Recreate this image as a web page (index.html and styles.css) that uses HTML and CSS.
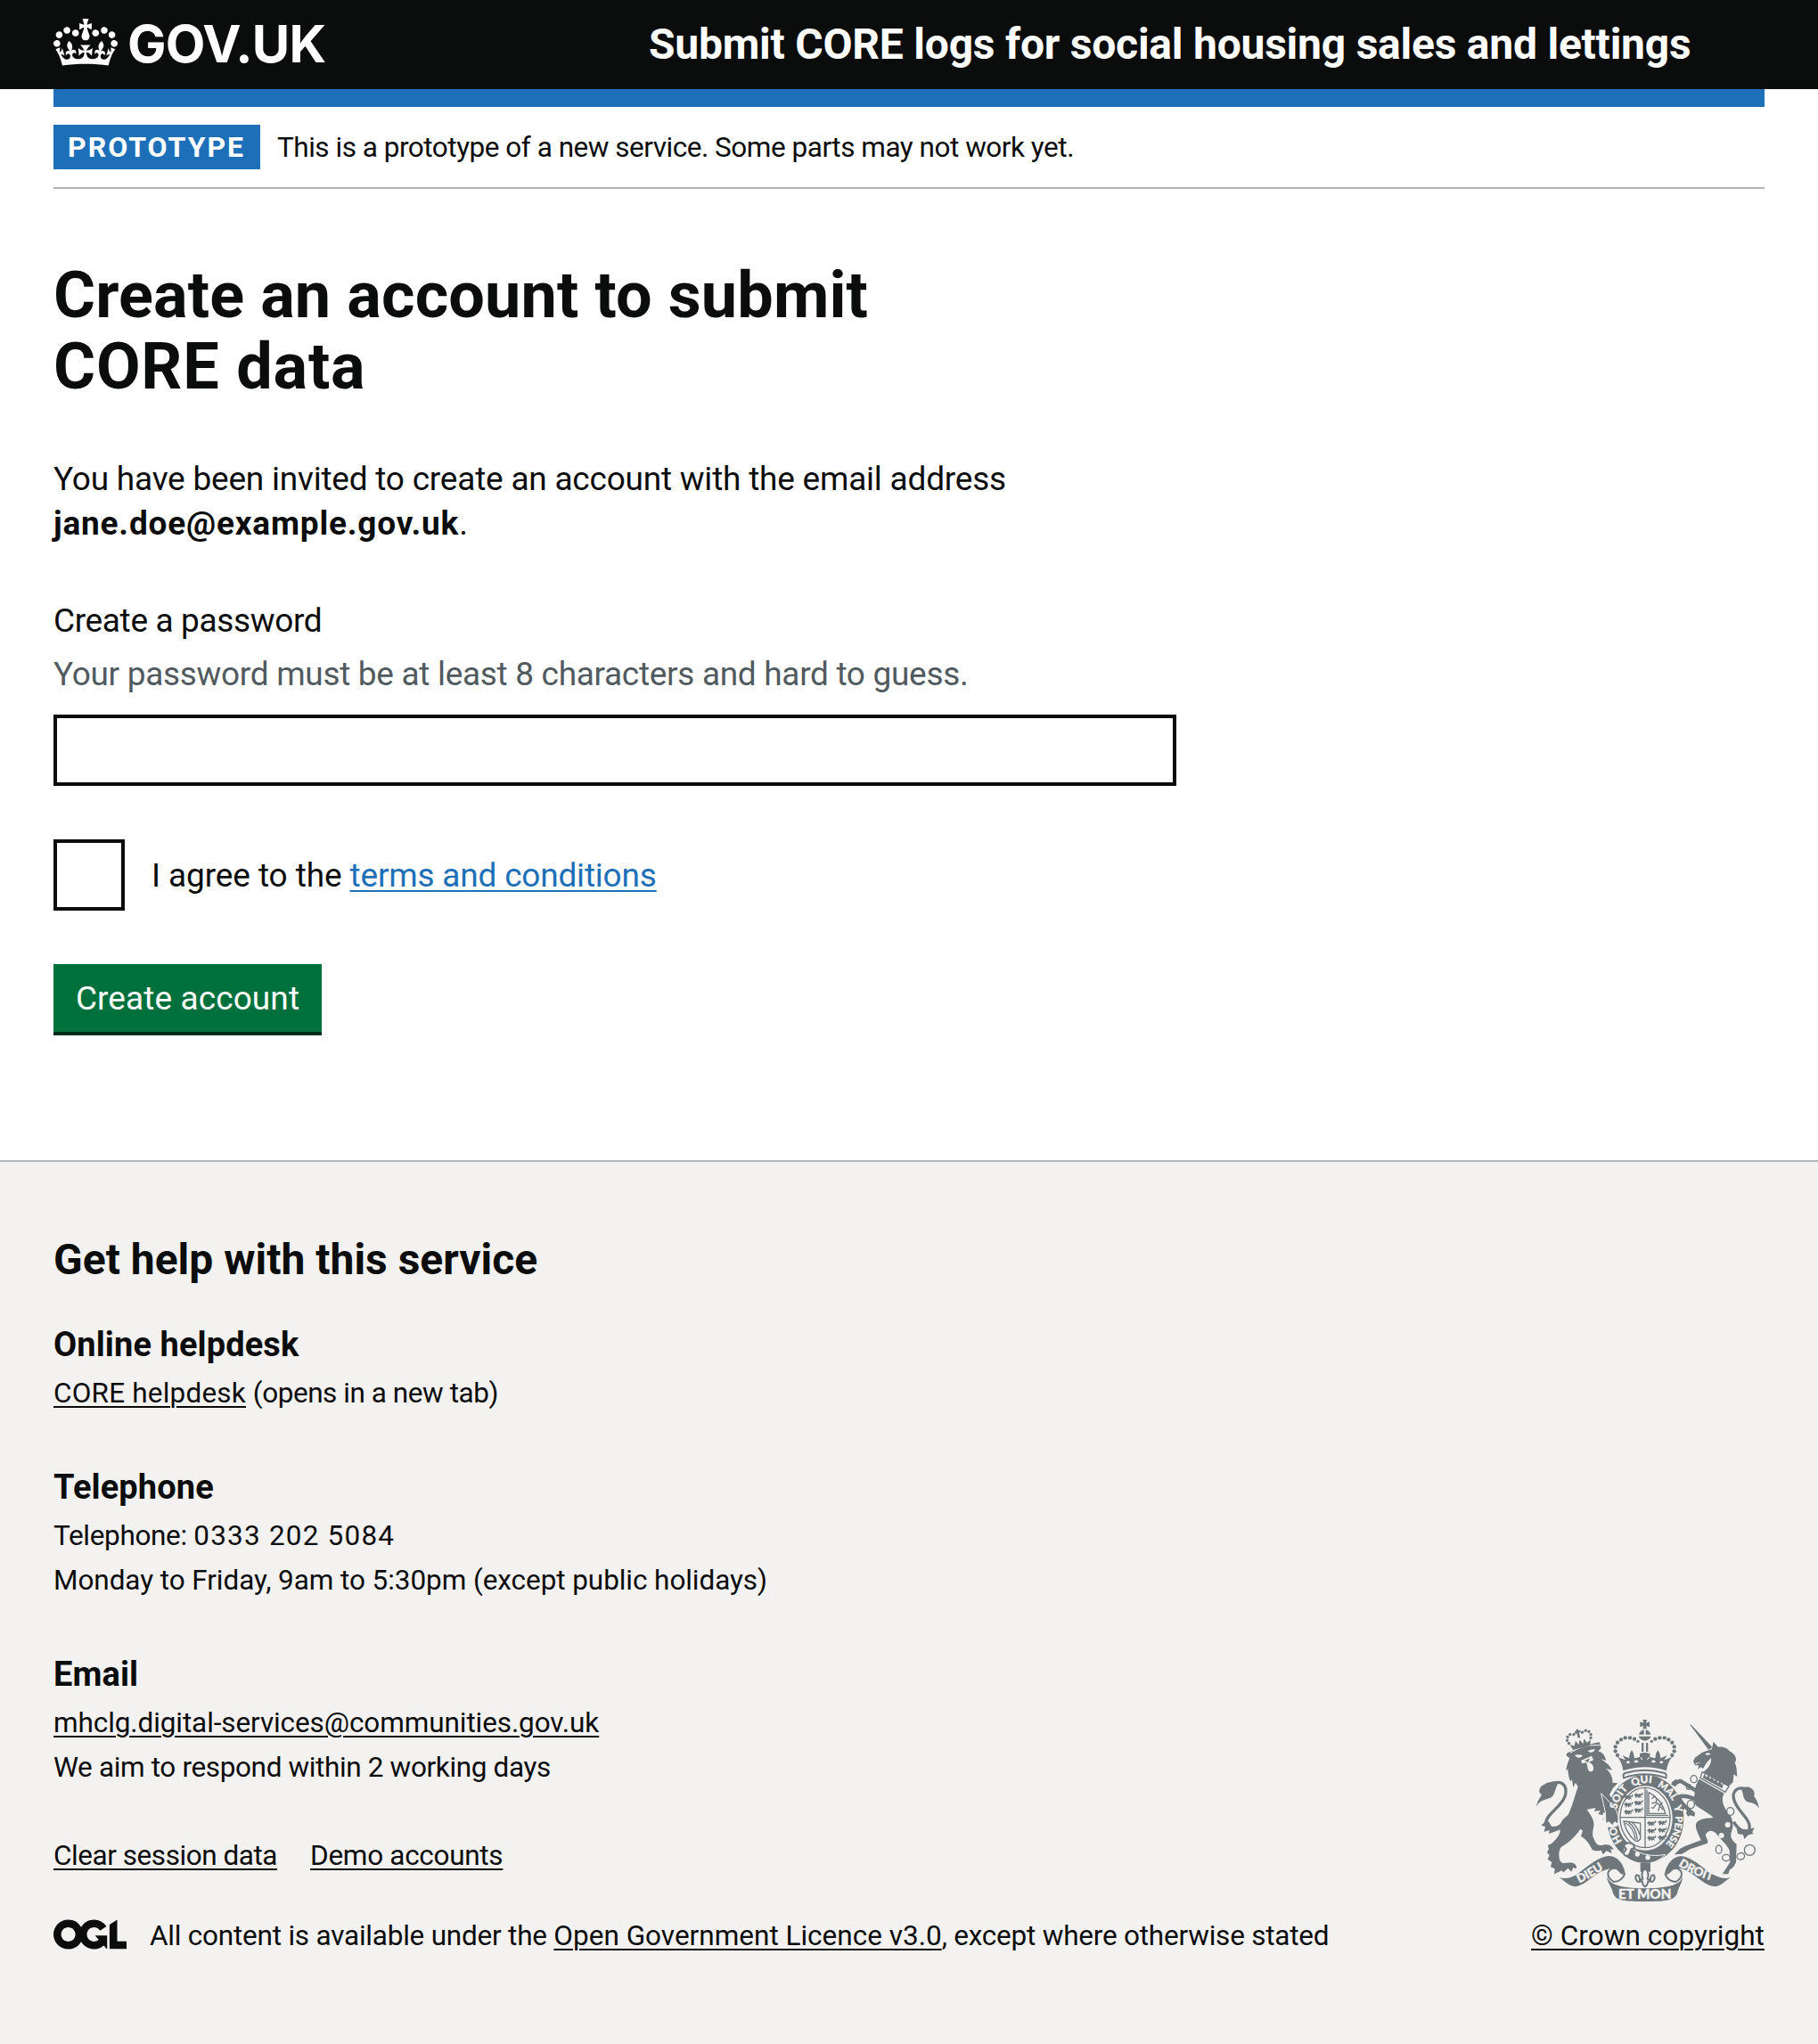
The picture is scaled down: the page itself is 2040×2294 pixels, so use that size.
FILE: index.html
```html
<!DOCTYPE html>
<html lang="en">
<head>
<meta charset="utf-8">
<title>Create an account to submit CORE data</title>
<link rel="stylesheet" href="styles.css">
</head>
<body>
<header class="header">
  <div class="header-inner">
    <a class="logo" href="#">
      <svg class="logo-crown" viewBox="0 0 132 97" aria-hidden="true"><path fill="currentColor" fill-rule="evenodd" d="M25 30.2c3.5 1.5 7.7-.2 9.1-3.7 1.5-3.6-.2-7.8-3.9-9.2-3.6-1.4-7.6.3-9.1 3.9-1.4 3.5.3 7.5 3.9 9zM9 39.5c3.6 1.5 7.8-.2 9.2-3.7 1.5-3.6-.2-7.8-3.9-9.1-3.6-1.5-7.6.2-9.1 3.8-1.4 3.5.3 7.5 3.8 9zM4.4 57.2c3.5 1.5 7.7-.2 9.1-3.8 1.5-3.6-.2-7.7-3.9-9.1-3.5-1.5-7.6.3-9.1 3.8-1.4 3.5.3 7.6 3.9 9.1zm38.3-21.4c3.5 1.5 7.7-.2 9.1-3.8 1.5-3.6-.2-7.7-3.9-9.1-3.6-1.5-7.6.3-9.1 3.8-1.3 3.6.4 7.7 3.9 9.1zm64.4-5.6c-3.6 1.5-7.8-.2-9.1-3.7-1.5-3.6.2-7.8 3.8-9.2 3.6-1.4 7.7.3 9.2 3.9 1.3 3.5-.4 7.5-3.9 9zm15.9 9.3c-3.6 1.5-7.7-.2-9.1-3.7-1.5-3.6.2-7.8 3.7-9.1 3.6-1.5 7.7.2 9.2 3.8 1.5 3.5-.3 7.5-3.8 9zm4.7 17.7c-3.6 1.5-7.8-.2-9.2-3.8-1.5-3.6.2-7.7 3.9-9.1 3.6-1.5 7.7.3 9.2 3.8 1.3 3.5-.4 7.6-3.9 9.1zM89.3 35.8c-3.6 1.5-7.8-.2-9.2-3.8-1.4-3.6.2-7.7 3.9-9.1 3.6-1.5 7.7.3 9.2 3.8 1.4 3.6-.3 7.7-3.9 9.1zM69.7 17.7l8.9 4.7V9.3l-8.9 2.8c-.2-.3-.5-.6-.9-.9L72.4 0H59.6l3.5 11.2c-.3.3-.6.5-.9.9l-8.8-2.8v13.1l8.8-4.7c.3.3.6.7.9.9l-5 15.4v.1c-.2.8-.4 1.6-.4 2.4 0 4.1 3.1 7.5 7 8.1h.2c.3 0 .7.1 1 .1.4 0 .7 0 1-.1h.2c4-.6 7.1-4.1 7.1-8.1 0-.8-.1-1.7-.4-2.4V34l-5.1-15.4c.4-.2.7-.6 1-.9zM66 92.8c16.9 0 32.8 1.1 47.1 3.2 4-16.9 8.9-26.7 14-33.5l-9.6-3.4c1 4.9 1.1 7.2 0 10.2-1.5-1.4-3-4.3-4.2-8.7L108.6 76c2.8-2 5-3.2 7.5-3.3-4.4 9.4-10 11.9-13.6 11.2-4.3-.8-6.3-4.6-5.6-7.9 1-4.7 5.7-5.9 8-.5 4.3-8.7-3-11.4-7.6-8.8 7.1-7.2 7.9-13.5 2.1-21.1-8 6.1-8.1 12.3-4.5 20.8-4.7-5.4-12.1-2.5-9.5 6.2 3.4-5.2 7.9-2 7.2 3.1-.6 4.3-6.4 7.8-13.5 7.2-10.3-.9-10.9-8-11.2-13.8 2.5-.5 7.1 1.8 11 7.3L80.2 60c-4.1 4.4-8 5.3-12.3 5.4 1.4-4.4 8-11.6 8-11.6H55.5s6.4 7.2 7.9 11.6c-4.2-.1-8-1-12.3-5.4l1.4 16.4c3.9-5.5 8.5-7.7 10.9-7.3-.3 5.8-.9 12.8-11.1 13.8-7.2.6-12.9-2.9-13.5-7.2-.7-5 3.8-8.3 7.1-3.1 2.7-8.7-4.6-11.6-9.4-6.2 3.7-8.5 3.6-14.7-4.6-20.8-5.8 7.6-5 13.9 2.2 21.1-4.7-2.6-11.9.1-7.7 8.8 2.3-5.5 7.1-4.2 8.1.5.7 3.3-1.3 7.1-5.7 7.9-3.5.7-9-1.8-13.5-11.2 2.5.1 4.7 1.3 7.5 3.3l-4.7-15.4c-1.2 4.4-2.7 7.2-4.3 8.7-1.1-3-.9-5.3 0-10.2l-9.5 3.4c5 6.9 9.9 16.7 14 33.5 14.8-2.1 30.8-3.2 47.7-3.2z"/></svg>
      <span class="logo-text">GOV.UK</span>
    </a>
    <a class="service-name" href="#">Submit CORE logs for social housing sales and lettings</a>
  </div>
</header>

<div class="container">
  <div class="blue-bar"></div>
  <div class="phase-banner">
    <strong class="tag">PROTOTYPE</strong>
    <span class="phase-text">This is a prototype of a new service. Some parts may not work yet.</span>
  </div>
  <main class="main">
    <h1 class="heading-l">Create an account to submit<br><span class="heading-tail">CORE data</span></h1>
    <p class="body"><span class="intro">You have been invited to create an account with the email address</span><br><strong class="email">jane.doe@example.gov.uk</strong>.</p>
    <form class="form">
      <label class="label" for="password">Create a password</label>
      <div class="hint">Your password must be at least 8 characters and hard to guess.</div>
      <input class="input" id="password" type="password">
      <div class="checkbox">
        <input class="checkbox-input" id="terms" type="checkbox">
        <label class="checkbox-label" for="terms">I agree to the <a class="link" href="#">terms and conditions</a></label>
      </div>
      <button class="button" type="button">Create account</button>
    </form>
  </main>
</div>

<footer class="footer">
  <div class="container footer-inner">
    <div class="footer-main">
      <h2 class="heading-m">Get help with this service</h2>
      <h3 class="heading-s">Online helpdesk</h3>
      <ul class="list">
        <li><a class="footer-link t-core" href="#">CORE helpdesk</a> <span class="t-opens">(opens in a new tab)</span></li>
      </ul>
      <h3 class="heading-s">Telephone</h3>
      <ul class="list">
        <li class="t-phone">Telephone: <span class="t-number">0333 202 5084</span></li>
        <li class="t-hours">Monday to Friday, 9am to 5:30pm (except public holidays)</li>
      </ul>
      <h3 class="heading-s">Email</h3>
      <ul class="list list-last">
        <li class="t-mail"><a class="footer-link" href="#">mhclg.digital-services@communities.gov.uk</a></li>
        <li class="t-reply">We aim to respond within 2 working days</li>
      </ul>
      <nav class="meta-links">
        <a class="footer-link t-clear" href="#">Clear session data</a>
        <a class="footer-link t-demo" href="#">Demo accounts</a>
      </nav>
      <div class="licence">
        <svg class="ogl" viewBox="0 0 483.2 195.7" aria-hidden="true"><path fill="currentColor" d="M421.5 142.8V.1l-50.7 32.3v161.1h112.4v-50.7zm-122.3-9.6A47.12 47.12 0 0 1 221 97.8c0-26 21.1-47.1 47.1-47.1 16.7 0 31.4 8.7 39.7 21.8l42.7-27.2A97.63 97.63 0 0 0 268.1 0c-36.5 0-68.3 20.1-85.1 49.7A98 98 0 0 0 97.8 0C43.9 0 0 43.9 0 97.8s43.9 97.8 97.8 97.8c36.5 0 68.3-20.1 85.1-49.7a97.76 97.76 0 0 0 149.6 25.4l19.4 22.2h3v-87.8h-80l24.3 27.5zM97.8 145c-26 0-47.1-21.1-47.1-47.1s21.1-47.1 47.1-47.1 47.1 21.1 47.1 47.1S123.8 145 97.8 145"/></svg>
        <span class="licence-text">All content is available under the <a class="footer-link t-ogl" href="#">Open Government Licence v3.0</a>, except where otherwise stated</span>
      </div>
    </div>
    <div class="copyright">
      <svg class="crest" viewBox="72 60 750 612" aria-hidden="true">
        <defs>
          <path id="g1" d="M361.6 469A101 118 0 0 1 338 410"/>
          <path id="g2" d="M342 362A101 118 0 0 1 410 278"/>
          <path id="g3" d="M397 286A101 118 0 0 1 505 297"/>
          <path id="g4" d="M479 285A101 118 0 0 1 545 385"/>
          <path id="g5" d="M534 351A101 118 0 0 1 540 410"/>
          <path id="g6" d="M540 385A101 118 0 0 1 475 502"/>
          <path id="r1" d="M216 610Q266 588 328 542"/>
          <path id="r2" d="M549 551Q604 588 700 614"/>
          <g id="beast"><path d="M0 6l6-5 5 4 9-2 5 4-5 3 6 7-8-3-3 5-4-6-7 6-1-8-4-1z"/><path class="thin" d="M22 8q8-2 4-8"/></g>
          <g id="three"><use href="#beast"/><use href="#beast" y="25"/><use href="#beast" y="50"/></g>
        </defs>

        <!-- lion -->
        <path class="tail" d="M116 282C150 260 176 274 170 312C164 350 100 380 104 410C108 440 150 430 166 400"/>
        <path d="M72 352C76 330 84 326 90 312C76 306 80 286 98 278C116 268 146 264 152 270C132 282 140 308 122 322C104 330 84 330 72 352Z"/>
        <path d="M108 396L88 416L102 420L98 438L116 432L114 444L148 432L158 418L124 420Z"/>
        <path d="M172 180L176 172L196 164L262 140L284 136L290 156L280 166C298 172 304 184 306 198L290 192C308 206 320 214 326 230L306 224C322 238 330 256 328 272L346 274L330 290L318 312L340 350C348 370 352 390 346 412L336 404L330 416L318 404L308 412L306 394L296 398L298 382L280 378L288 366L266 368L272 358C262 356 250 362 242 362C256 384 270 400 264 424C262 436 258 446 266 462C272 478 280 486 296 482C312 478 328 484 332 498L322 496L326 510L308 502L296 514L290 500C276 504 262 502 258 494C246 470 236 462 222 452L228 434L220 428C204 452 180 476 156 488C146 500 146 520 152 536C162 548 172 540 184 542C200 540 210 552 206 562L196 558L190 572L178 560L164 574L156 568C150 572 140 576 132 580L134 562L120 556L124 540L110 530L116 516L108 508L114 494L110 484L124 476C136 466 150 450 152 436C146 420 156 396 178 382C194 350 200 320 212 286L204 272L196 288L192 262L186 268C180 252 178 236 178 226L172 232C174 212 180 200 184 190Z"/>
        <path class="paper" d="M200 180Q214 176 228 180Q222 190 212 188ZM244 166Q256 158 270 160Q264 172 254 170ZM222 198L258 182L264 196L248 204C262 206 268 222 262 232C254 240 244 230 244 218L240 204L226 208Z"/>
        <path d="M234 198l18-8-6 14z"/>
        <path class="cut" d="M186 172Q230 142 286 146"/>
        <g transform="rotate(-14 216 130)">
          <path d="M188 156L182 136L196 144L204 128L211 144L218 128L226 144L234 128L240 144L254 136L248 156Z"/>
          <circle cx="180" cy="131" r="5"/><circle cx="177" cy="120" r="5"/><circle cx="181" cy="109" r="5"/><circle cx="191" cy="103" r="5"/><circle cx="203" cy="106" r="5"/><circle cx="256" cy="131" r="5"/><circle cx="259" cy="120" r="5"/><circle cx="255" cy="109" r="5"/><circle cx="245" cy="103" r="5"/><circle cx="233" cy="106" r="5"/>
          <path d="M214 92h8v5h6v8h-6v16h-8v-16h-6v-8h6z"/>
        </g>

        <!-- unicorn -->
        <path class="tail" d="M776 292C740 284 726 310 742 342C760 378 798 400 788 432C778 448 750 428 736 404"/>
        <path d="M822 360C818 338 812 326 804 318C812 304 798 288 782 286L760 292C770 304 764 324 780 336C796 340 814 342 822 360Z"/>
        <path d="M780 430L806 424L798 440L804 444L786 448L772 462L768 448L750 444L746 426Z"/>
        <path d="M588 76L594 78L664 152L652 162Z"/>
        <path d="M662 160L668 134L684 152C706 150 716 158 722 166C738 174 744 184 744 196L740 206C748 220 746 236 748 252L736 244L734 270L720 284L634 236C652 222 662 208 660 188C650 200 640 208 634 224L624 220L616 228L618 214L606 214L600 200L606 188L630 170Z"/>
        <path class="paper" d="M640 176q10-8 18 0q-8 6-18 0zM606 208l22-6-18 8z"/>
        <path class="line" d="M630 236L720 284L708 304L624 256Z"/>
        <path d="M632 256l6-14 6 12 8-8 4 14 8-8 6 14 8-8 4 16 8-8 6 14 6-8-4 20z"/>
        <path d="M620 260L704 308C690 335 706 360 722 378C736 400 736 420 728 440C722 462 738 470 746 480L744 540L736 556L722 566L718 580L698 580L714 556L724 540L722 500C712 478 694 466 676 442C664 430 650 432 642 446C640 456 652 462 648 476L590 496L562 512L536 514L556 494L572 486L626 466C622 452 604 430 610 408C622 392 646 392 668 390C646 368 608 356 604 340L604 326C604 300 606 280 620 260Z"/>
        <path class="limb" d="M612 300C590 290 570 272 556 266L536 276M610 328C590 322 566 312 552 320C556 340 576 358 602 378M566 346L562 364"/>
        <path d="M528 270l14-10 10 6-12 20-14-8zM580 364l26 12-2 10-14-4-8 4-6-12z"/>
        <g class="line"><ellipse cx="602" cy="260" rx="11" ry="12"/><ellipse cx="584" cy="286" rx="7" ry="9"/><ellipse class="paper" cx="592" cy="345" rx="12" ry="14"/><ellipse class="paper" cx="725" cy="369" rx="12" ry="13"/><ellipse cx="686" cy="497" rx="10" ry="14"/><ellipse cx="711" cy="525" rx="13" ry="11"/><ellipse cx="760" cy="520" rx="13" ry="11" transform="rotate(-25 760 520)"/><circle cx="790" cy="499" r="18"/></g>
        <g class="paper"><circle cx="716" cy="414" r="9"/><circle cx="695" cy="450" r="9"/></g>

        <!-- garter and shield -->
        <path fill-rule="evenodd" d="M439 246C512 246 568 310 568 392C568 474 512 540 439 540C366 540 310 474 310 392C310 310 366 246 439 246ZM439 283C388 283 346 332 346 392C346 452 388 500 439 500C490 500 530 452 530 392C530 332 490 283 439 283Z"/>
        <path class="paper" d="M296 372L350 392L346 418L328 424L300 420Z"/>
        <path class="paw" d="M290 308L324 344C344 362 352 388 346 412L336 404L328 416L316 404L306 410L304 372Z"/>
        <ellipse class="line" cx="438" cy="390" rx="84" ry="101"/>
        <path class="line" d="M438 290V492M354 389H524M444 296V382H516M450 304V376H506Q496 330 450 304"/>
        <use href="#three" x="368" y="312"/><use href="#three" x="402" y="306"/>
        <use href="#three" x="446" y="400"/><use href="#three" x="482" y="398"/>
        <path class="thin" d="M460 326l10-8 8 10-4 10 14 10 8-10M474 338l-14 4M488 348l-6 20M476 344l-10 14-8-2M488 350l10 14"/>
        <path class="line" d="M366 402L422 408V462Q412 474 402 466Q374 440 366 402ZM372 408Q398 420 406 464M382 406Q408 422 412 464M394 406Q412 420 420 448"/>
        <g class="paper motto">
          <text><textPath href="#g1">HO</textPath></text>
          <text><textPath href="#g2">SOIT</textPath></text>
          <text><textPath href="#g3">QUI</textPath></text>
          <text class="tight"><textPath href="#g4">MAL</textPath></text>
          <text><textPath href="#g5">Y</textPath></text>
          <text class="tight"><textPath href="#g6">PENSE</textPath></text>
        </g>
        <path class="edge" d="M372 480C410 512 460 524 506 514C488 534 464 544 438 544C408 544 384 534 364 514Z"/>
        <g class="paper"><circle cx="412" cy="513" r="8"/><circle cx="447" cy="524" r="8"/></g>
        <path class="buckle" d="M366 484Q376 472 390 476Q402 478 402 492L392 496L384 516Q368 524 366 508L374 496Z"/>

        <!-- royal crown -->
        <path d="M346 186L372 196L362 180L384 190Q384 174 393 162Q402 174 402 190L420 186Q424 196 430 196L420 176L428 172H446L454 176L444 196Q450 196 454 186L472 190Q472 174 481 162Q490 174 490 190L512 180L502 196L528 186Q512 208 510 232Q474 220 437 220Q400 220 364 232Q362 208 346 186Z"/>
        <path class="paper" d="M374 204q6-10 14 0q-8 7-14 0zM400 202q8-12 16 0q-8 6-16 0zM458 202q8-12 16 0q-8 6-16 0zM486 204q6-10 14 0q-8 7-14 0z"/>
        <path class="band" d="M370 240Q437 220 504 240Q512 244 508 256Q437 232 366 256Q362 244 370 240Z"/>
        <g><circle cx="345" cy="180" r="6.500"/><circle cx="338" cy="166" r="6.500"/><circle cx="338" cy="151" r="6.500"/><circle cx="345" cy="137" r="6.500"/><circle cx="357" cy="127" r="6.500"/><circle cx="371" cy="121" r="6.500"/><circle cx="387" cy="121" r="6.500"/><circle cx="402" cy="125" r="6.500"/><circle cx="414" cy="133" r="5"/><circle cx="529" cy="180" r="6.500"/><circle cx="536" cy="166" r="6.500"/><circle cx="536" cy="151" r="6.500"/><circle cx="529" cy="137" r="6.500"/><circle cx="517" cy="127" r="6.500"/><circle cx="503" cy="121" r="6.500"/><circle cx="487" cy="121" r="6.500"/><circle cx="472" cy="125" r="6.500"/><circle cx="460" cy="133" r="5"/></g>
        <path d="M430 60H444L441 71L453 67V85L441 81L444 91H430L433 81L421 85V67L433 71ZM434 94V110H417Q420 98 434 94ZM440 94Q454 98 457 110H440ZM416 116H458Q454 128 437 131Q420 128 416 116ZM426 138h7v30h-7zM441 138h7v30h-7z"/>
        <path d="M420 172l10 8-10 12zM454 172l-10 8 10 12zM428 172h18l-6 10h-6z"/>

        <!-- pendant -->
        <path d="M422 542h34v30h-34z"/>
        <path class="fleur" d="M438 560Q422 574 430 596L420 600Q420 580 408 584Q402 598 414 606L428 604Q430 618 438 622Q446 618 448 604L462 606Q474 598 468 584Q456 580 456 600L446 596Q454 574 438 560Z"/>

        <!-- ribbon -->
        <path d="M148 592Q182 600 212 578C252 548 284 520 318 519C346 520 366 546 371 578C360 586 354 576 344 566C326 554 306 566 288 572C262 584 234 620 202 622C178 620 166 600 148 592Z"/>
        <path d="M727 592Q698 600 664 580C624 552 596 524 560 519C532 520 510 546 504 578C514 586 520 576 532 566C548 556 568 562 586 572C614 590 644 620 674 622C696 620 708 600 727 592Z"/>
        <path class="curl" d="M370 578C362 600 344 606 332 606C310 592 306 572 326 562C338 558 352 564 362 574M505 578C512 600 530 606 542 606C564 592 568 572 548 562C536 558 522 564 512 574"/>
        <path d="M310 588C316 612 350 628 437 628C524 628 560 612 564 588C566 604 552 620 546 644C538 666 516 672 437 672C358 672 338 666 330 644C326 622 308 606 310 588Z"/>
        <g class="paper ribbon">
          <text x="348" y="664" textLength="178" lengthAdjust="spacingAndGlyphs">ET MON</text>
          <text class="side"><textPath href="#r1">DIEU</textPath></text>
          <text class="side"><textPath href="#r2">DROIT</textPath></text>
        </g>
      </svg>
      <a class="footer-link t-crown" href="#">© Crown copyright</a>
    </div>
  </div>
</footer>
</body>
</html>
```
FILE: styles.css
```css
* {
  box-sizing: border-box;
}

body {
  margin: 0;
  background: #fff;
  color: #0b0c0c;
  font-family: Roboto, "Liberation Sans", sans-serif;
  font-size: 37px;
  line-height: 50px;
}

h1, h2, h3, p, ul {
  margin: 0;
  padding: 0;
}

.container {
  margin: 0 60px;
}

/* Header */
.header {
  background: #0b0c0c;
  color: #fff;
}

.header-inner {
  display: flex;
  align-items: center;
  height: 100px;
  margin: 0 60px;
}

.header a {
  color: inherit;
  text-decoration: none;
}

.logo {
  display: flex;
  align-items: flex-start;
  width: 668px;
  height: 58px;
}

.logo-crown {
  width: 72px;
  height: 53px;
}

.logo-text {
  margin-left: 11px;
  font-family: Inter, "Liberation Sans", sans-serif;
  font-size: 58px;
  font-weight: 700;
  line-height: 56px;
  letter-spacing: -0.8px;
}

.service-name {
  font-size: 48px;
  font-weight: 700;
  line-height: 60px;
  letter-spacing: -0.23px;
}

.blue-bar {
  height: 20px;
  background: #1d70b8;
}

/* Phase banner */
.phase-banner {
  display: flex;
  align-items: center;
  gap: 19px;
  padding: 20px 0;
  border-bottom: 2px solid #b1b4b6;
}

.tag {
  width: 232px;
  height: 50px;
  padding: 1px 16px;
  background: #1d70b8;
  color: #fff;
  font-size: 32px;
  line-height: 48px;
  letter-spacing: 2px;
}

.phase-text {
  height: 50px;
  font-size: 31.5px;
  line-height: 52px;
  letter-spacing: -0.48px;
}

/* Main content */
.main {
  height: 1090px;
  padding-top: 80px;
}

.heading-l {
  margin-bottom: 61px;
  font-size: 72px;
  line-height: 80px;
  letter-spacing: 0.12px;
}

.heading-tail {
  letter-spacing: 0.8px;
}

.body {
  margin-bottom: 59px;
}

.intro {
  letter-spacing: -0.22px;
}

.email {
  letter-spacing: 0.8px;
}

.form {
  display: flex;
  flex-direction: column;
  align-items: flex-start;
}

.label {
  margin-bottom: 10px;
  letter-spacing: -0.35px;
}

.hint {
  margin-bottom: 20px;
  color: #505a5f;
  letter-spacing: -0.31px;
}

.input {
  width: 1260px;
  height: 80px;
  margin: 0 0 60px;
  border: 4px solid #0b0c0c;
  border-radius: 0;
  background: #fff;
}

.checkbox {
  display: flex;
  align-items: center;
  gap: 30px;
  margin-bottom: 60px;
}

.checkbox-input {
  appearance: none;
  width: 80px;
  height: 80px;
  margin: 0;
  border: 4px solid #0b0c0c;
  background: #fff;
}

.checkbox-label {
  padding-top: 2px;
  letter-spacing: -0.1px;
}

.link {
  color: #1d70b8;
  letter-spacing: -0.2px;
  text-decoration-thickness: 2px;
  text-underline-offset: 4px;
}

.button {
  width: 301px;
  height: 76px;
  padding: 2px 0 0;
  border: 0;
  background: #00703c;
  box-shadow: 0 4px 0 #002d18;
  color: #fff;
  font: inherit;
  letter-spacing: 0.1px;
}

/* Footer */
.footer {
  height: 992px;
  padding-top: 80px;
  border-top: 2px solid #b1b4b6;
  background: #f3f2f1;
}

.footer-inner {
  display: flex;
  justify-content: space-between;
  align-items: flex-end;
}

.heading-m {
  margin-bottom: 40px;
  font-size: 48px;
  line-height: 60px;
}

.heading-s {
  margin-bottom: 10px;
  font-size: 38px;
  line-height: 50px;
  letter-spacing: 0.1px;
}

.list,
.meta-links,
.licence,
.copyright {
  font-size: 31.5px;
  line-height: 40px;
}

.list {
  display: flex;
  flex-direction: column;
  gap: 10px;
  margin-bottom: 60px;
  list-style: none;
}

.list-last {
  margin-bottom: 59px;
}

.footer-link {
  color: #0b0c0c;
  text-decoration-thickness: 2px;
  text-underline-offset: 4px;
}

.meta-links {
  display: flex;
  gap: 37px;
  margin-bottom: 50px;
}

.licence {
  display: flex;
  align-items: flex-start;
}

.ogl {
  width: 82px;
  height: 34px;
  margin: 1px 26px 0 0;
}

.licence-text {
  letter-spacing: -0.22px;
}

.copyright {
  display: flex;
  flex-direction: column;
  align-items: center;
  gap: 19px;
}

.t-core { letter-spacing: 0.2px; }
.t-opens { letter-spacing: -0.45px; }
.t-phone { letter-spacing: -0.33px; }
.t-number { letter-spacing: 1.2px; }
.t-hours { letter-spacing: -0.07px; }
.t-mail { letter-spacing: -0.1px; }
.t-reply { letter-spacing: -0.36px; }
.t-clear { letter-spacing: -0.45px; }
.t-demo { letter-spacing: -0.3px; }
.t-ogl { letter-spacing: 0; }
.t-crown { letter-spacing: 0.07px; }

/* Crest */
.crest {
  width: 250px;
  height: 204px;
  fill: #6f777b;
}

.crest .tail,
.crest .limb,
.crest .line,
.crest .thin,
.crest .curl {
  fill: none;
  stroke: #6f777b;
}

.crest .tail { stroke-width: 10; }
.crest .limb { stroke-width: 13; stroke-linejoin: round; }
.crest .line { stroke-width: 4; }
.crest .thin { stroke-width: 4; }
.crest .curl { stroke-width: 6; }

.crest .paper { fill: #f3f2f1; }

.crest .cut {
  fill: none;
  stroke: #f3f2f1;
  stroke-width: 3;
}

.crest .edge,
.crest .paw {
  stroke: #f3f2f1;
  stroke-width: 3;
}

.crest .band,
.crest .buckle,
.crest .fleur {
  fill: #f3f2f1;
  stroke: #6f777b;
  stroke-width: 6;
}

.crest .motto {
  font: 900 35px Lato, sans-serif;
  stroke: #f3f2f1;
  stroke-width: 1;
}

.crest .tight { font-size: 33px; }

.crest .ribbon {
  font: 900 44px Lato, sans-serif;
  stroke: #f3f2f1;
  stroke-width: 1;
}

.crest .side { font-size: 40px; }
```
